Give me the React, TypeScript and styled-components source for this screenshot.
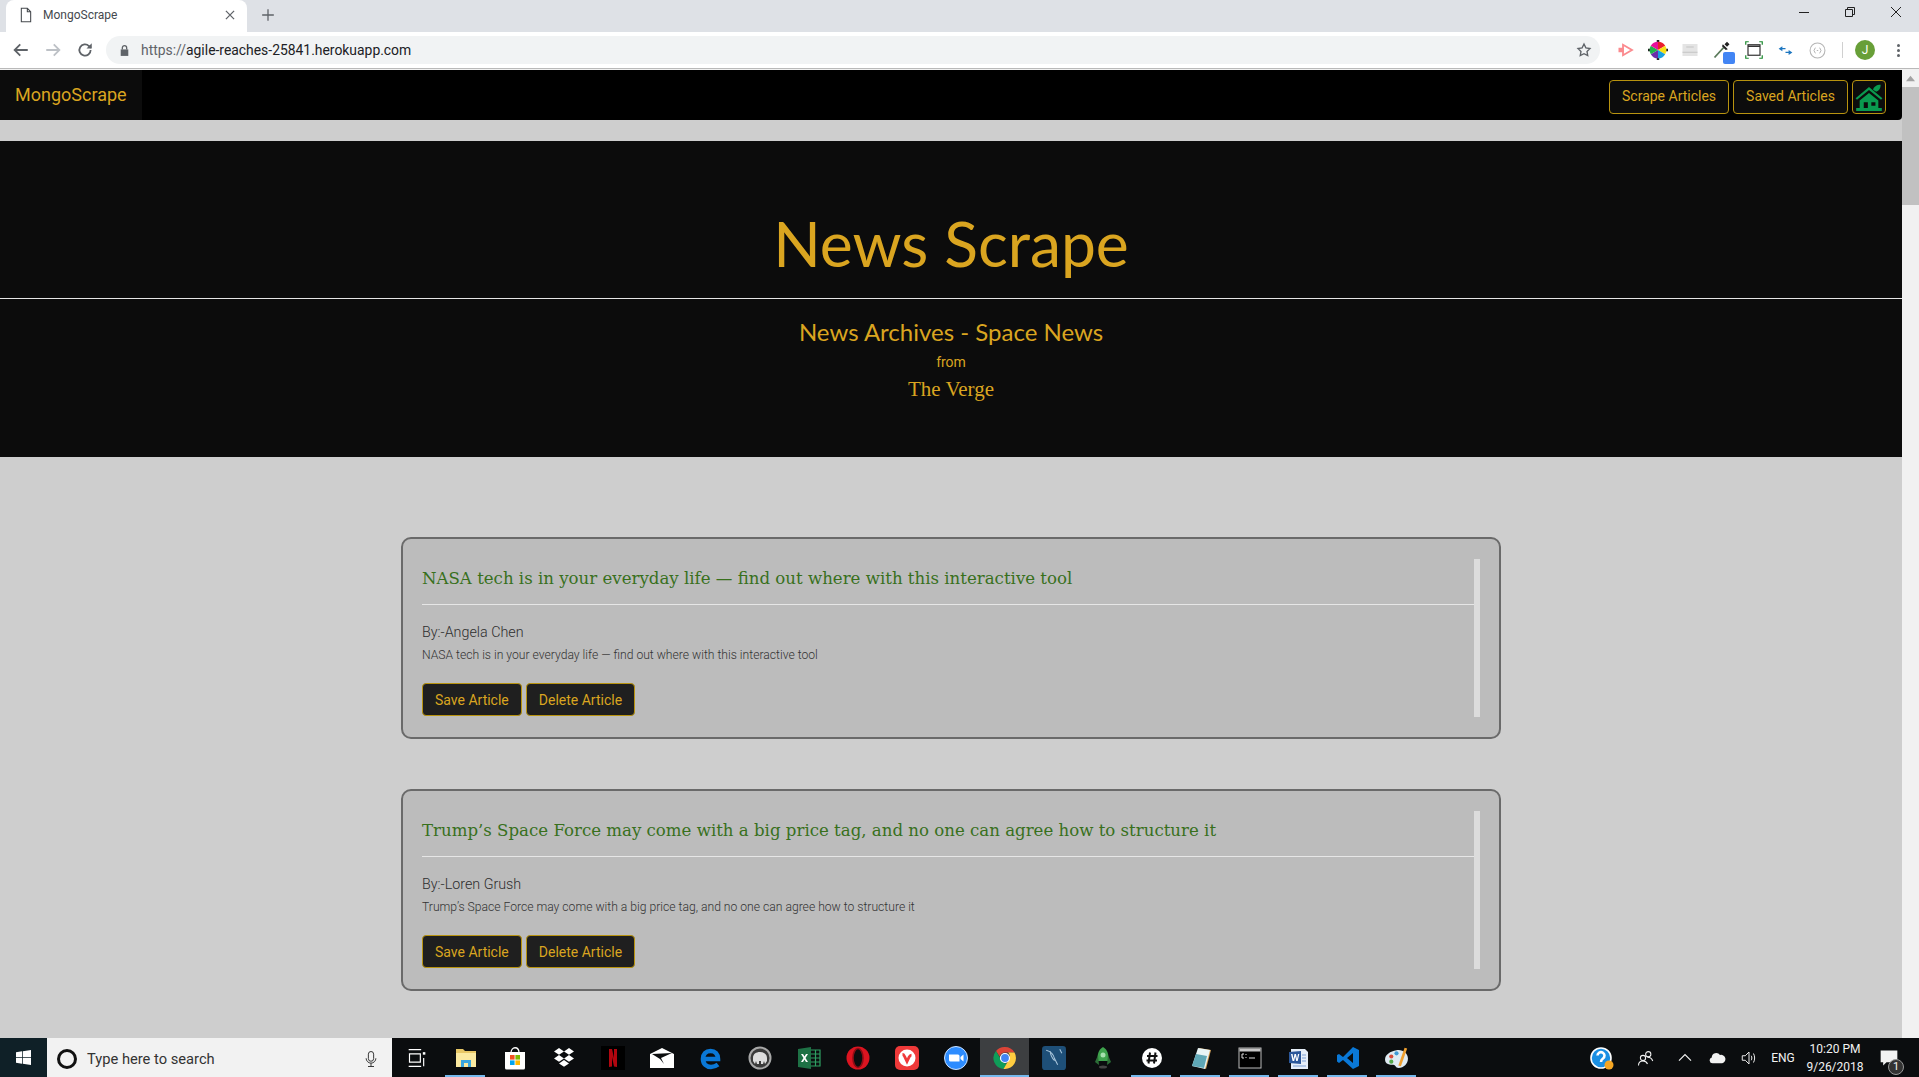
import React from "react";
import styled, { createGlobalStyle } from "styled-components";

const GOLD = "#daa520";

const articles = [
  {
    title: "NASA tech is in your everyday life — find out where with this interactive tool",
    author: "Angela Chen",
  },
  {
    title: "Trump’s Space Force may come with a big price tag, and no one can agree how to structure it",
    author: "Loren Grush",
  },
];

const GlobalStyle = createGlobalStyle`
  html, body {
    margin: 0;
    height: 100%;
    overflow: hidden;
  }
  body {
    font-family: Roboto, "Liberation Sans", sans-serif;
  }
  * {
    box-sizing: border-box;
  }
`;

const Screen = styled.div`
  height: 100vh;
  display: flex;
  flex-direction: column;
  background: #cecece;
`;

/* browser chrome */
const TabStrip = styled.div`
  height: 32px;
  flex-shrink: 0;
  background: #dee1e6;
  display: flex;
  align-items: stretch;
  padding-left: 6px;
`;

const Tab = styled.div`
  width: 241px;
  background: #fff;
  border-radius: 8px 8px 0 0;
  display: flex;
  align-items: center;
  padding: 0 10px 2px 12px;
  gap: 9px;
  font-size: 12px;
  color: #45494e;
`;

const TabTitle = styled.span`
  flex: 1;
`;

const NewTab = styled.div`
  width: 42px;
  padding-bottom: 2px;
  display: flex;
  align-items: center;
  justify-content: center;
`;

const WindowControls = styled.div`
  margin-left: auto;
  display: flex;
  height: 100%;
`;

const WindowButton = styled.div`
  width: 46px;
  height: 23px;
  display: flex;
  align-items: center;
  justify-content: center;
`;

const Toolbar = styled.div`
  height: 37px;
  flex-shrink: 0;
  background: #fff;
  display: flex;
  align-items: center;
  padding: 0 8px;
  border-bottom: 1px solid #b9b9b9;
`;

const NavIcons = styled.div`
  display: flex;
  align-items: center;
  gap: 14px;
  width: 98px;
  padding-left: 4px;
`;

const UrlBar = styled.div`
  width: 1494px;
  height: 28px;
  background: #f1f3f4;
  border-radius: 14px;
  display: flex;
  align-items: center;
  padding: 0 8px 0 12px;
  gap: 10px;
  font-size: 13.9px;
  color: #202124;
`;

const UrlText = styled.span`
  flex: 1;
  span {
    color: #5f6368;
  }
`;

const Extensions = styled.div`
  display: flex;
  align-items: center;
  margin-left: 15px;
  gap: 11px;
`;

const Extension = styled.div`
  width: 21px;
  height: 21px;
  display: flex;
  align-items: center;
  justify-content: center;
  position: relative;
`;

const Separator = styled.div`
  width: 1px;
  height: 16px;
  background: #d0d0d0;
  margin: 0 1px 0 3px;
`;

const Avatar = styled.div`
  width: 20px;
  height: 20px;
  border-radius: 50%;
  background: #689f38;
  color: #fff;
  font-size: 12px;
  display: flex;
  align-items: center;
  justify-content: center;
`;

const Dots = styled.div`
  display: flex;
  flex-direction: column;
  gap: 2px;
  margin-left: 11px;
  i {
    width: 3px;
    height: 3px;
    border-radius: 50%;
    background: #5f6368;
  }
`;

/* page */
const Viewport = styled.div`
  flex: 1;
  min-height: 0;
  display: flex;
  padding-top: 1px;
  background: #f1f1f1;
`;

const Page = styled.div`
  flex: 1;
  min-width: 0;
  overflow: hidden;
  background: #cecece;
`;

const Navbar = styled.nav`
  height: 50px;
  background: #000;
  border-radius: 0 0 4px 0;
  display: flex;
  align-items: stretch;
  justify-content: space-between;
  padding-right: 16px;
`;

const Brand = styled.div`
  width: 142px;
  background: #0c0c0c;
  color: ${GOLD};
  font-size: 18px;
  line-height: 50px;
  padding-left: 15px;
`;

const NavActions = styled.div`
  display: flex;
  align-items: center;
  gap: 4px;
  padding-top: 3px;
`;

const NavButton = styled.button`
  height: 34px;
  padding: 0 12px 1px;
  background: #0c0c0c;
  border: 1px solid #b8930f;
  border-radius: 4px;
  color: ${GOLD};
  font: 400 14px Roboto, sans-serif;
  display: flex;
  align-items: center;
`;

const HomeButton = styled(NavButton)`
  width: 34px;
  padding: 0;
  justify-content: center;
`;

const Hero = styled.header`
  margin-top: 21px;
  height: 316px;
  background: #0c0c0c;
  color: ${GOLD};
  text-align: center;
  padding-top: 67px;
`;

const HeroTitle = styled.h1`
  margin: 0;
  font: 400 62.4px/70px Lato, "Noto Sans", sans-serif;
`;

const HeroRule = styled.hr`
  margin: 20px 0 0;
  border: 0;
  border-top: 1px solid #e6e6e6;
`;

const HeroSubtitle = styled.h2`
  margin: 18px 0 0;
  font: 400 24px/30px Lato, "Noto Sans", sans-serif;
`;

const HeroFrom = styled.div`
  margin-top: 5px;
  font: 400 14px/20px Roboto, sans-serif;
`;

const HeroSource = styled.div`
  margin-top: 4px;
  font: 400 21px/26px "Liberation Serif", serif;
`;

const ArticleList = styled.main`
  width: 1100px;
  margin: 80px auto 0;
  display: flex;
  flex-direction: column;
  gap: 50px;
`;

const Card = styled.article`
  height: 202px;
  background: #bcbcbc;
  border: 2px solid #6a6a6a;
  border-radius: 10px;
  padding: 20px 19px 20px 19px;
`;

const CardInner = styled.div`
  height: 100%;
  border-right: 6px solid #dcdcdc;
`;

const CardTitle = styled.h3`
  margin: 0;
  height: 46px;
  padding-top: 8px;
  border-bottom: 1px solid #e6e6e6;
  color: #38701c;
  font: 400 16.6px/24px "DejaVu Serif", serif;
`;

const Author = styled.div`
  margin-top: 19px;
  font: 300 14.3px/16px Roboto, sans-serif;
  color: #2e2e2e;
`;

const Summary = styled.div`
  margin-top: 8px;
  font: 300 12.15px/15px Roboto, sans-serif;
  color: #333;
`;

const CardActions = styled.div`
  margin-top: 20px;
  display: flex;
  gap: 4px;
`;

const CardButton = styled.button`
  height: 33px;
  padding: 0 12px;
  background: #1f1f1f;
  border: 1px solid #b8930f;
  border-radius: 4px;
  color: ${GOLD};
  font: 400 14px Roboto, sans-serif;
`;

const Scrollbar = styled.div`
  width: 17px;
  flex-shrink: 0;
  background: #f1f1f1;
  display: flex;
  flex-direction: column;
  align-items: center;
`;

const ScrollArrow = styled.div`
  height: 17px;
  width: 100%;
  display: flex;
  align-items: center;
  justify-content: center;
`;

const ScrollThumb = styled.div`
  width: 100%;
  height: 118px;
  background: #c1c1c1;
`;

/* windows taskbar */
const Taskbar = styled.footer`
  height: 39px;
  flex-shrink: 0;
  background: #0b0d0f;
  display: flex;
  align-items: stretch;
`;

const StartButton = styled.div`
  width: 47px;
  background: #0f2027;
  display: flex;
  align-items: center;
  justify-content: center;
`;

const SearchBox = styled.div`
  width: 345px;
  background: #f2f2f2;
  display: flex;
  align-items: center;
  padding: 2px 12px 0 10px;
  font-size: 14.7px;
  color: #333;
`;

const SearchRing = styled.div`
  width: 20px;
  height: 20px;
  border: 3px solid #111;
  border-radius: 50%;
  margin-right: 10px;
`;

const SearchLabel = styled.span`
  flex: 1;
`;

const TaskIcons = styled.div`
  display: flex;
  align-items: stretch;
`;

const TaskIcon = styled.div<{ $open?: boolean; $active?: boolean }>`
  width: 49px;
  display: flex;
  align-items: center;
  justify-content: center;
  position: relative;
  background: ${(p) => (p.$active ? "#3d3f41" : "transparent")};
  &::after {
    content: "";
    display: ${(p) => (p.$open ? "block" : "none")};
    position: absolute;
    bottom: 0;
    left: ${(p) => (p.$active ? "0" : "4px")};
    right: ${(p) => (p.$active ? "0" : "5px")};
    height: 2px;
    background: #76b9ed;
  }
`;

const Tray = styled.div`
  margin-left: auto;
  display: flex;
  align-items: center;
  color: #f2f2f2;
  padding-right: 14px;
`;

const TrayIcon = styled.div<{ $after?: number }>`
  width: 32px;
  margin-right: ${(p) => p.$after ?? 0}px;
  display: flex;
  justify-content: center;
  align-items: center;
  position: relative;
`;

const Lang = styled.span`
  font-size: 12px;
  width: 28px;
  margin-left: 4px;
  text-align: center;
`;

const Clock = styled.div`
  width: 76px;
  text-align: center;
  font-size: 12px;
  line-height: 18px;
`;

const NotifyBadge = styled.span`
  position: absolute;
  right: 1px;
  bottom: -7px;
  width: 16px;
  height: 16px;
  border-radius: 50%;
  background: #333;
  border: 1px solid #999;
  font-size: 11px;
  line-height: 14px;
  text-align: center;
`;

const BlueDot = styled.span`
  position: absolute;
  right: -3px;
  bottom: -3px;
  width: 12px;
  height: 12px;
  border-radius: 2px;
  background: #4285f4;
`;

const Svg = ({ s = 20, children, vb = "0 0 24 24" }: { s?: number; vb?: string; children: React.ReactNode }) => (
  <svg width={s} height={s} viewBox={vb}>
    {children}
  </svg>
);

const taskIcons: { icon: React.ReactNode; open?: boolean; active?: boolean }[] = [
  {
    icon: (
      <Svg s={20}>
        <path fill="none" stroke="#fff" strokeWidth="1.4" d="M2 2h15M2 22h15M3 7h13v10H3zM20 12v10" />
        <rect x="19" y="5" width="3" height="3" fill="#fff" />
      </Svg>
    ),
  },
  {
    open: true,
    icon: (
      <Svg s={24}>
        <path fill="#e8c766" d="M2 3h7l2 2h11v16H2z" />
        <path fill="#fbe9a0" d="M2 7h20v14H2z" />
        <path fill="#3aa6e0" d="M7 21v-7h10v7h-3v-4h-4v4z" />
      </Svg>
    ),
  },
  {
    icon: (
      <Svg s={24}>
        <path fill="none" stroke="#fff" strokeWidth="1.3" d="M8 7c0-7 8-7 8 0" />
        <path fill="#fff" d="M2 6h20v16a1.500 1.500 0 0 1-1.500 1.500h-17A1.500 1.500 0 0 1 2 22z" />
        <path fill="#f25022" d="M7 9h4.600v4.600H7z" />
        <path fill="#7fba00" d="M12.400 9H17v4.600h-4.600z" />
        <path fill="#00a4ef" d="M7 14.400h4.600V19H7z" />
        <path fill="#ffb900" d="M12.400 14.400H17V19h-4.600z" />
      </Svg>
    ),
  },
  {
    icon: (
      <Svg s={24}>
        <path fill="#fff" d="M7 2l5 3.400-5 3.400-5-3.400zM17 2l5 3.400-5 3.400-5-3.400zM7 9l5 3.400-5 3.400-5-3.400zM17 9l5 3.400-5 3.400-5-3.400zM12 14l5 3.400-5 3.400-5-3.400z" />
      </Svg>
    ),
  },
  {
    icon: (
      <Svg s={24}>
        <rect width="24" height="24" fill="#000" />
        <path fill="#b1060f" d="M8 3h3l2 9V3h3v18l-3-.4L11 11v9.600L8 21z" />
      </Svg>
    ),
  },
  {
    icon: (
      <Svg s={24}>
        <path fill="#fff" d="M0 8l12-6 12 6v14H0z" />
        <path fill="#0b0d0f" d="M2 8l20-1-11 5 3 6-4-5z" />
      </Svg>
    ),
  },
  {
    icon: (
      <Svg s={24}>
        <path
          fill="none"
          stroke="#0a78d7"
          strokeWidth="4.600"
          d="M4 13h15c0-5-3-8-7.500-8S4 8 4 13s3.500 8 8 8c3 0 5-1 7-2.500"
        />
      </Svg>
    ),
  },
  {
    icon: (
      <Svg s={24}>
        <circle cx="12" cy="12" r="10.500" fill="#3a3a3a" stroke="#a8a8a8" strokeWidth="2" />
        <path fill="#ddd" d="M5 12c0-4 3-6 7-6s7 2 7 6v3l-2 3-1-3-1 3h-2v-3h-2v3H9l-1-3-1 3-2-3z" />
      </Svg>
    ),
  },
  {
    icon: (
      <Svg s={24}>
        <path fill="#1e7145" d="M1 3l13-2v22L1 21z" />
        <path fill="#fff" d="M4 8h2l1.500 2.500L9 8h2l-2.500 4 2.500 4H9l-1.500-2.500L6 16H4l2.500-4z" />
        <path fill="none" stroke="#2f9e62" strokeWidth="1.200" d="M14 4h9v16h-9M14 8h9M14 12h9M14 16h9M18.500 4v16" />
      </Svg>
    ),
  },
  {
    icon: (
      <Svg s={24}>
        <circle cx="12" cy="12" r="11.500" fill="#dc1420" />
        <ellipse cx="12" cy="12" rx="5" ry="9.500" fill="#0b0d0f" stroke="#8e0c14" strokeWidth="1.600" />
      </Svg>
    ),
  },
  {
    icon: (
      <Svg s={24}>
        <rect width="24" height="24" rx="5" fill="#ef3939" />
        <circle cx="12" cy="12" r="8.500" fill="#fff" />
        <path fill="none" stroke="#ef3939" strokeWidth="2.800" d="M7.500 8.500c1.500 0 1.500 1 2.300 2.400l2.200 4.600 2.200-4.600c.5-1 1-1.800 2.300-1.800" />
      </Svg>
    ),
  },
  {
    icon: (
      <Svg s={24}>
        <circle cx="12" cy="12" r="11.500" fill="#2d8cff" stroke="#cfe4ff" strokeWidth="1" />
        <path fill="#fff" d="M5 8.500h9a1.500 1.500 0 0 1 1.500 1.500v5.500H6.500A1.500 1.500 0 0 1 5 14zM16.500 11l3-2.500v7l-3-2.500z" />
      </Svg>
    ),
  },
  {
    active: true,
    open: true,
    icon: (
      <Svg s={24}>
        <path fill="#db4437" d="M12 1a11 11 0 0 1 9.500 5.500H12a5.500 5.500 0 0 0-5.300 4L3 5a11 11 0 0 1 9-4z" />
        <path fill="#0f9d58" d="M3 5l5.500 9.500a5.500 5.500 0 0 0 5.500 3L10.500 23A11 11 0 0 1 3 5z" />
        <path fill="#ffcd40" d="M21.500 6.500a11 11 0 0 1-9.500 16.500h-1.500l5.200-9a5.500 5.500 0 0 0-.700-7.500z" />
        <circle cx="12" cy="12" r="4.500" fill="#4285f4" stroke="#fff" strokeWidth="1.200" />
      </Svg>
    ),
  },
  {
    icon: (
      <Svg s={25}>
        <rect x="1" y="1" width="23" height="23" rx="3" fill="#1e4f78" />
        <path fill="none" stroke="#a9c6dc" strokeWidth="1" d="M5 5c4 1 7 4 8 8l3 6M9 6c0 4 2 7 4 9M18 4l2 4" />
      </Svg>
    ),
  },
  {
    icon: (
      <Svg s={24}>
        <path fill="#3fa34d" d="M12 1c5 3 6 8 5 14H7C6 9 7 4 12 1z" />
        <circle cx="12" cy="9" r="2.500" fill="#a7e0ae" />
        <path fill="#2c6e37" d="M7 9l-3 7 4 3zM17 9l3 7-4 3z" />
        <ellipse cx="12" cy="21" rx="4" ry="1.500" fill="#444" />
      </Svg>
    ),
  },
  {
    open: true,
    icon: (
      <Svg s={24}>
        <circle cx="12" cy="12" r="10" fill="#fff" />
        <path fill="none" stroke="#111" strokeWidth="2" d="M10 6.500l-1.500 11M15.500 6.500l-1.500 11M7 10h10.500M6.500 14.500H17" />
      </Svg>
    ),
  },
  {
    open: true,
    icon: (
      <Svg s={24}>
        <path fill="#d8a45a" d="M10 2l12 2-5 19-2-1z" />
        <path fill="#e8f4f6" d="M9 2l12 2-5 19-13-3z" />
        <path fill="#5fa7b6" d="M3 20l4-12 11 2-3 12z" />
      </Svg>
    ),
  },
  {
    open: true,
    icon: (
      <Svg s={24}>
        <rect x="1" y="2" width="22" height="20" fill="#000" stroke="#bbb" strokeWidth="1" />
        <rect x="1.500" y="2.500" width="21" height="3" fill="#c8c8c8" />
        <path fill="none" stroke="#ddd" strokeWidth="1" d="M6 8H4v4h2M8 8v1M8 11v1M11 12h6" />
      </Svg>
    ),
  },
  {
    open: true,
    icon: (
      <Svg s={24}>
        <path fill="#e6eef8" d="M4 3h14l3 3v17H4z" />
        <path fill="#2b579a" d="M2 6l12-1v13l-12-1z" />
        <path fill="#fff" d="M4 8h1.500l1 5 1-5H9l1 5 1-5h1.300l-1.600 7H9.200L8.200 10.500 7.200 15H5.600z" />
        <path fill="none" stroke="#7c9fd4" strokeWidth="1" d="M15 9h4M15 12h4M15 15h4M6 20h13" />
      </Svg>
    ),
  },
  {
    open: true,
    icon: (
      <Svg s={24}>
        <path fill="#0a78d7" d="M17 1l6 3v16l-6 3-10-9-4 3-2-1.500V9L3 8l4 3zM17 7l-6 5 6 5z" />
      </Svg>
    ),
  },
  {
    open: true,
    icon: (
      <Svg s={25}>
        <path fill="#dfeaf2" d="M12 5c6-1 11 3 11 8s-4 9-9 9c-3 0-3-3-5-3-3 0-8 0-8-5 0-5 5-8 11-9z" />
        <circle cx="7" cy="11" r="2" fill="#d84a3a" />
        <circle cx="12" cy="8" r="2" fill="#3f9ad6" />
        <circle cx="7" cy="16" r="2" fill="#53a84b" />
        <path fill="none" stroke="#f0a030" strokeWidth="2.600" d="M15 20L21 3" />
      </Svg>
    ),
  },
];

export default function App() {
  return (
    <Screen>
      <GlobalStyle />
      <TabStrip>
        <Tab>
          <Svg s={16}>
            <path fill="none" stroke="#45494e" strokeWidth="1.600" d="M5 2h9l5 5v15H5zM14 2v5h5" />
          </Svg>
          <TabTitle>MongoScrape</TabTitle>
          <Svg s={14}>
            <path stroke="#5f6368" strokeWidth="2.200" d="M5 5l14 14M19 5L5 19" />
          </Svg>
        </Tab>
        <NewTab>
          <Svg s={14}>
            <path stroke="#5f6368" strokeWidth="2.200" d="M12 2v20M2 12h20" />
          </Svg>
        </NewTab>
        <WindowControls>
          <WindowButton>
            <Svg s={10} vb="0 0 10 10">
              <path stroke="#222" d="M0 5.500h10" />
            </Svg>
          </WindowButton>
          <WindowButton>
            <Svg s={10} vb="0 0 10 10">
              <path fill="none" stroke="#222" d="M.5 2.500h7v7h-7zM2.500 2.500v-2h7v7h-2" />
            </Svg>
          </WindowButton>
          <WindowButton>
            <Svg s={10} vb="0 0 10 10">
              <path stroke="#222" d="M0 0l10 10M10 0L0 10" />
            </Svg>
          </WindowButton>
        </WindowControls>
      </TabStrip>

      <Toolbar>
        <NavIcons>
          <Svg s={18}>
            <path fill="none" stroke="#5f6368" strokeWidth="2.400" d="M21 12H4M11 4.500L3.500 12l7.500 7.500" />
          </Svg>
          <Svg s={18}>
            <path fill="none" stroke="#bdc1c6" strokeWidth="2.400" d="M3 12h17M13 4.500l7.500 7.500-7.500 7.500" />
          </Svg>
          <Svg s={18}>
            <path fill="none" stroke="#5f6368" strokeWidth="2.400" d="M19.500 12a7.500 7.500 0 1 1-2.200-5.300L20 9" />
            <path fill="#5f6368" d="M21 3v7h-7z" />
          </Svg>
        </NavIcons>
        <UrlBar>
          <Svg s={13}>
            <path fill="#5f6368" d="M5 10h14v12H5z" />
            <path fill="none" stroke="#5f6368" strokeWidth="2.400" d="M8 10V7a4 4 0 0 1 8 0v3" />
          </Svg>
          <UrlText>
            <span>https://</span>agile-reaches-25841.herokuapp.com
          </UrlText>
          <Svg s={16}>
            <path
              fill="none"
              stroke="#5f6368"
              strokeWidth="2"
              d="M12 3l2.800 5.800 6.200.9-4.500 4.400 1.100 6.300L12 17.500l-5.600 2.900 1.100-6.300L3 9.700l6.200-.9z"
            />
          </Svg>
        </UrlBar>
        <Extensions>
          <Extension>
            <Svg s={18}>
              <path fill="none" stroke="#fb8a8e" strokeWidth="2.400" d="M8 5l12 7-12 7z" />
              <rect x="2" y="9" width="7" height="6" fill="#fb8a8e" />
            </Svg>
          </Extension>
          <Extension>
            <Svg s={20}>
              <path fill="#222" d="M10.500 0h3v3h-3zM10.500 21h3v3h-3zM0 10.500h3v3H0zM21 10.500h3v3h-3z" />
              <path fill="#ea1d2c" d="M12 12V2a10 10 0 0 1 8.660 5z" />
              <path fill="#f7e018" d="M12 12l8.660-5a10 10 0 0 1 0 10z" />
              <path fill="#1aa0e0" d="M12 12l8.660 5A10 10 0 0 1 12 22z" />
              <path fill="#6a2da8" d="M12 12v10a10 10 0 0 1-8.660-5z" />
              <path fill="#1fb24a" d="M12 12l-8.660 5a10 10 0 0 1 0-10z" />
              <path fill="#e6109a" d="M12 12L3.340 7A10 10 0 0 1 12 2z" />
            </Svg>
          </Extension>
          <Extension>
            <Svg s={18}>
              <rect x="2" y="4" width="20" height="16" fill="#e4e4e4" />
              <path stroke="#c4c4c4" strokeWidth="1.600" d="M2 15h20M7 8h10" />
            </Svg>
          </Extension>
          <Extension>
            <Svg s={20}>
              <path fill="none" stroke="#5a7a5a" strokeWidth="2.200" d="M3 21L14 9" />
              <path fill="#222" d="M13 5l6 6-2.500 1-4.500-4.500zM15 5l3-3 3 3-3 3z" />
            </Svg>
            <BlueDot />
          </Extension>
          <Extension>
            <Svg s={18}>
              <rect x="4" y="5" width="16" height="14" fill="none" stroke="#333" strokeWidth="1.600" />
              <path stroke="#333" strokeWidth="2" d="M4 7h16" />
              <path fill="none" stroke="#1b8a2e" strokeWidth="1.600" d="M1 5V1h4M19 1h4v4M23 19v4h-4M5 23H1v-4" />
            </Svg>
          </Extension>
          <Extension>
            <Svg s={15}>
              <path fill="#1d76c0" d="M1 9l6-4v3h5v2H7v3zM23 15l-6-4v3h-5v2h5v3z" />
            </Svg>
          </Extension>
          <Extension>
            <Svg s={17}>
              <circle cx="12" cy="12" r="10.500" fill="none" stroke="#b5b5b5" strokeWidth="1.500" />
              <path fill="none" stroke="#b5b5b5" strokeWidth="1.400" d="M9 8l-2 4 2 4M15 8l2 4-2 4M11 12h2" />
            </Svg>
          </Extension>
          <Separator />
          <Avatar>J</Avatar>
          <Dots>
            <i />
            <i />
            <i />
          </Dots>
        </Extensions>
      </Toolbar>

      <Viewport>
        <Page>
          <Navbar>
            <Brand>MongoScrape</Brand>
            <NavActions>
              <NavButton>Scrape Articles</NavButton>
              <NavButton>Saved Articles</NavButton>
              <HomeButton>
                <Svg s={28}>
                  <path
                    fill="#0a9a4f"
                    d="M15.500 5.800c.3-2.500 3-4.300 6.500-4.300 0 3-1.300 5.200-3.800 6zM12 3.500l11.500 9.500-1.200 1.400L12 6 1.700 14.400.5 13zM4 15l8-6.500 8 6.500v6.500H4zm3.500 1.500v5h3.500v-5zm6.500 0v3h3.500v-3zM1 21.500h22V24H1z"
                    fillRule="evenodd"
                  />
                </Svg>
              </HomeButton>
            </NavActions>
          </Navbar>
          <Hero>
            <HeroTitle>News Scrape</HeroTitle>
            <HeroRule />
            <HeroSubtitle>News Archives - Space News</HeroSubtitle>
            <HeroFrom>from</HeroFrom>
            <HeroSource>The Verge</HeroSource>
          </Hero>
          <ArticleList>
            {articles.map((article) => (
              <Card key={article.author}>
                <CardInner>
                  <CardTitle>{article.title}</CardTitle>
                  <Author>By:-{article.author}</Author>
                  <Summary>{article.title}</Summary>
                  <CardActions>
                    <CardButton>Save Article</CardButton>
                    <CardButton>Delete Article</CardButton>
                  </CardActions>
                </CardInner>
              </Card>
            ))}
          </ArticleList>
        </Page>
        <Scrollbar>
          <ScrollArrow>
            <Svg s={9} vb="0 0 10 10">
              <path fill="#a3a3a3" d="M5 2l5 6H0z" />
            </Svg>
          </ScrollArrow>
          <ScrollThumb />
        </Scrollbar>
      </Viewport>

      <Taskbar>
        <StartButton>
          <Svg s={15} vb="0 0 20 20">
            <path fill="#fff" d="M0 3l8-1.200V9.500H0zM9 1.600L20 0v9.500H9zM0 10.500h8v7.700L0 17zM9 10.500h11V20L9 18.400z" />
          </Svg>
        </StartButton>
        <SearchBox>
          <SearchRing />
          <SearchLabel>Type here to search</SearchLabel>
          <Svg s={18}>
            <rect x="8.500" y="2" width="7" height="13" rx="3.500" fill="none" stroke="#333" strokeWidth="1.300" />
            <path fill="none" stroke="#333" strokeWidth="1.300" d="M5.500 11a6.500 6.500 0 0 0 13 0M12 17.500V22M8 22h8" />
          </Svg>
        </SearchBox>
        <TaskIcons>
          {taskIcons.map((t, i) => (
            <TaskIcon key={i} $open={t.open} $active={t.active}>
              {t.icon}
            </TaskIcon>
          ))}
        </TaskIcons>
        <Tray>
          <TrayIcon $after={12}>
            <Svg s={24}>
              <circle cx="11" cy="12" r="10" fill="#1a8fe3" stroke="#fff" strokeWidth="1.600" />
              <path fill="none" stroke="#fff" strokeWidth="2.600" d="M7.500 9.500a3.500 3.500 0 1 1 5.500 3c-1.500 1-2 1.500-2 3.500" />
              <circle cx="19" cy="19" r="4.500" fill="#f5a623" />
            </Svg>
          </TrayIcon>
          <TrayIcon $after={7}>
            <Svg s={18}>
              <g fill="none" stroke="#f2f2f2" strokeWidth="1.400">
                <circle cx="15" cy="7" r="3.500" />
                <circle cx="8" cy="12" r="3.500" />
                <path d="M2 22c0-4 2.500-6 6-6s5 1.500 6 4M14 11c3 0 6 2 7 5" />
              </g>
            </Svg>
          </TrayIcon>
          <TrayIcon>
            <Svg s={16}>
              <path fill="none" stroke="#f2f2f2" strokeWidth="1.800" d="M3 16l9-9 9 9" />
            </Svg>
          </TrayIcon>
          <TrayIcon>
            <Svg s={18}>
              <path fill="#f2f2f2" d="M6 19a4 4 0 0 1-1-7.800A6 6 0 0 1 16 8a4.800 4.800 0 0 1 3 11z" />
            </Svg>
          </TrayIcon>
          <TrayIcon>
            <Svg s={18}>
              <path fill="none" stroke="#f2f2f2" strokeWidth="1.300" d="M3 9h4l5-5v16l-5-5H3zM15 9c1 2 1 4 0 6M18 6c2 4 2 8 0 12" />
            </Svg>
          </TrayIcon>
          <Lang>ENG</Lang>
          <Clock>
            10:20 PM
            <br />
            9/26/2018
          </Clock>
          <TrayIcon>
            <Svg s={20}>
              <path fill="#f2f2f2" d="M2 3h20v14H9l-4 4v-4H2z" />
            </Svg>
            <NotifyBadge>1</NotifyBadge>
          </TrayIcon>
        </Tray>
      </Taskbar>
    </Screen>
  );
}
